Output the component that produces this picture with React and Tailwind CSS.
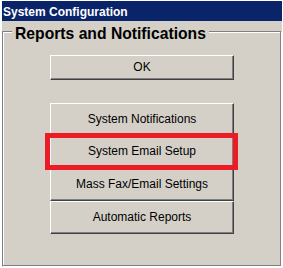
import React from 'react';

const ButtonBox = ({ label, height = 'h-[33px]' }) => (
  <button
    className={`${height} w-[184px] bg-[#d4d0c8] border border-t-white border-l-white border-r-[#404040] border-b-[#404040] shadow-[inset_-1px_-1px_0_#808080] text-[12px] text-black leading-none`}
  >
    {label}
  </button>
);

const App = () => {
  const items = ['System Notifications', 'System Email Setup', 'Mass Fax/Email Settings', 'Automatic Reports'];

  return (
    <div
      className="w-[283px] h-[268px] bg-white pt-[1px] pl-[2px] pr-[1px] pb-[1px] flex flex-col"
      style={{ fontFamily: '"Liberation Sans", Arial, sans-serif' }}
    >
      {/* Title bar */}
      <div className="h-[20px] bg-[#0a246a] text-white font-bold text-[12px] pl-[1px] pt-[3px] leading-[17px]">
        System Configuration
      </div>

      {/* Window body */}
      <div className="flex-1 bg-[#d4d0c8] pt-[10px] pr-[1px]">
        <div className="relative h-[235px] border border-[#808080] shadow-[inset_1px_1px_0_#fff,1px_1px_0_#fff] pt-[22px] pl-[47px]">
          <span className="absolute left-[9px] top-[-6px] bg-[#d4d0c8] px-[3px] text-[15.7px] font-bold leading-none text-black">
            Reports and Notifications
          </span>

          <ButtonBox label="OK" height="h-[25px]" />

          <div className="relative mt-[23px] flex flex-col w-[184px]">
            <ButtonBox label={items[0]} height="h-[32px]" />
            <ButtonBox label={items[1]} />
            <ButtonBox label={items[2]} />
            <ButtonBox label={items[3]} />
            {/* highlight */}
            <div className="absolute left-[-5px] top-[30px] w-[193px] h-[37px] border-[5px] border-[#ed1c24] pointer-events-none" />
          </div>
        </div>
      </div>
    </div>
  );
};

export default App;
